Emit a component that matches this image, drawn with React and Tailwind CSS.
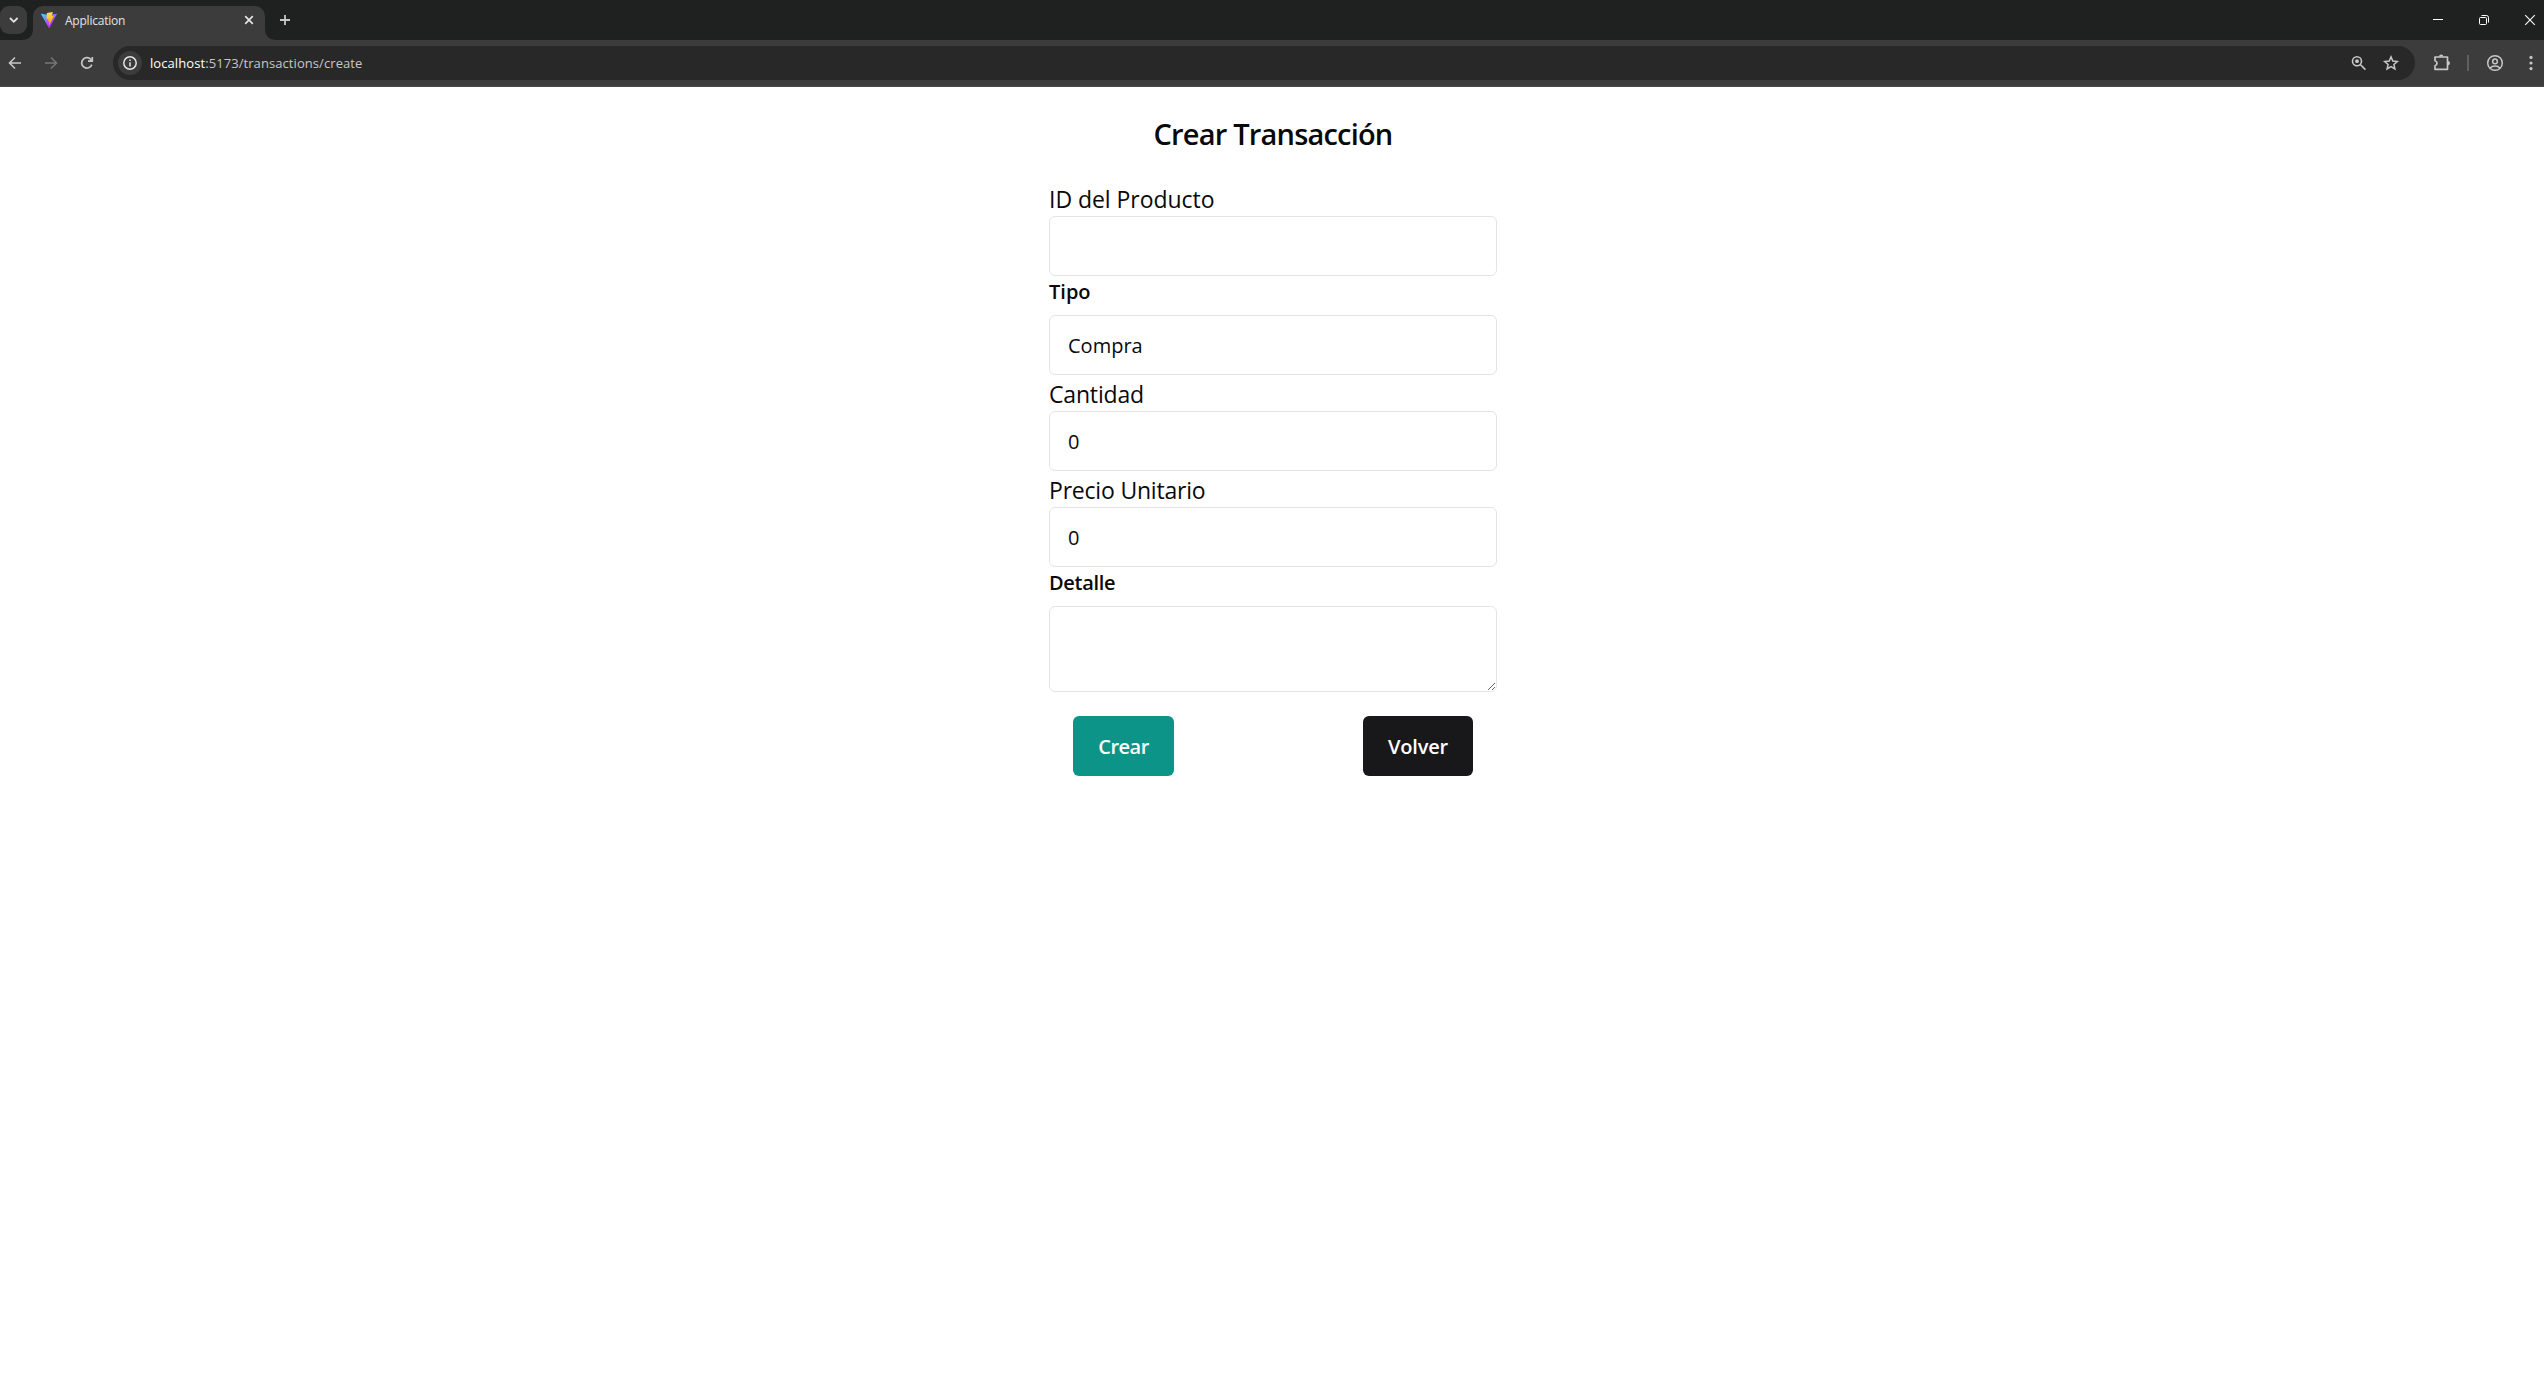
const ICON = "block h-5 w-5 shrink-0";

function Foot({ flip }) {
  return (
    <svg viewBox="0 0 10 10" className={flip ? "h-2.5 w-2.5 shrink-0 -scale-x-100" : "-ml-1 h-2.5 w-2.5 shrink-0"}>
      <path d="M10 0v10H0A10 10 0 0 0 10 0Z" fill="#3c3c3c" />
    </svg>
  );
}

function ViteLogo() {
  return (
    <svg viewBox="0 0 256 257" className="h-4 w-4 shrink-0">
      <defs>
        <linearGradient id="vite-a" x1="-.8%" x2="57.6%" y1="7.7%" y2="78.4%">
          <stop offset="0%" stopColor="#41D1FF" />
          <stop offset="100%" stopColor="#BD34FE" />
        </linearGradient>
        <linearGradient id="vite-b" x1="43.4%" x2="50.3%" y1="2.2%" y2="89%">
          <stop offset="0%" stopColor="#FFEA83" />
          <stop offset="8.3%" stopColor="#FFDD35" />
          <stop offset="100%" stopColor="#FFA800" />
        </linearGradient>
      </defs>
      <path fill="url(#vite-a)" d="M255.153 37.938L134.897 252.976c-2.483 4.44-8.862 4.466-11.382.048L.875 37.958c-2.746-4.814 1.371-10.646 6.827-9.67l120.385 21.517a6.537 6.537 0 0 0 2.322-.004l117.867-21.483c5.438-.991 9.574 4.796 6.877 9.62Z" />
      <path fill="url(#vite-b)" d="M185.432.063L96.44 17.501a3.268 3.268 0 0 0-2.634 3.014l-5.474 92.456a3.268 3.268 0 0 0 3.997 3.378l24.777-5.718c2.318-.535 4.413 1.507 3.936 3.838l-7.361 36.047c-.495 2.426 1.782 4.5 4.151 3.78l15.304-4.649c2.372-.72 4.652 1.36 4.15 3.788l-11.698 56.621c-.732 3.542 3.979 5.473 5.943 2.437l1.313-2.028l72.516-144.72c1.215-2.423-.88-5.186-3.54-4.672l-25.505 4.922c-2.396.462-4.435-1.77-3.759-4.114l16.646-57.705c.677-2.35-1.37-4.583-3.769-4.113Z" />
    </svg>
  );
}

function TabStrip() {
  return (
    <div className="flex h-10 bg-[#1f2120]">
      <div className="mt-1.5 flex h-7 w-[27px] items-center justify-center rounded-[9px] bg-[#3c3c3c]">
        <svg viewBox="0 0 20 20" className={ICON} fill="none" stroke="#e3e3e3" strokeWidth="1.8">
          <path d="M6 8l3.8 3.8L13.600 8" />
        </svg>
      </div>
      <div className="flex items-end">
        <Foot />
        <div className="flex h-[34px] w-[232px] items-center rounded-t-[10px] bg-[#3c3c3c] px-2 pb-1.5">
          <ViteLogo />
          <span className="ml-2 flex-1 pt-0.5 text-xs tracking-[-0.22px] text-[#e3e3e3]">Application</span>
          <svg viewBox="0 0 16 16" className="h-4 w-4" stroke="#e3e3e3" strokeWidth="1.7">
            <path d="M4.200 4.200l7.600 7.600M11.800 4.200l-7.600 7.600" />
          </svg>
        </div>
        <Foot flip />
      </div>
      <div className="flex flex-1 items-center text-[#c7c7c7]">
        <svg viewBox="0 0 20 20" className={ICON} stroke="currentColor" strokeWidth="1.8">
          <path d="M10 5v10M5 10h10" />
        </svg>
      </div>
      <div className="flex items-center gap-[26px] pr-1">
        <svg viewBox="0 0 20 20" className={ICON} stroke="#fff" strokeWidth="1">
          <path d="M5 9.500h10" />
        </svg>
        <svg viewBox="0 0 20 20" className={ICON} fill="none" stroke="#fff" strokeWidth="1">
          <rect x="5.500" y="7.500" width="7" height="7" rx="1" />
          <path d="M7.500 5.500h5a2 2 0 0 1 2 2v5" />
        </svg>
        <svg viewBox="0 0 20 20" className={ICON} stroke="#fff" strokeWidth="1.1">
          <path d="M5.200 5.200l9.600 9.600M14.800 5.200l-9.600 9.600" />
        </svg>
      </div>
    </div>
  );
}

function Toolbar() {
  return (
    <div className="flex h-[47px] items-center border-b border-[#4a4a4a] bg-[#3c3c3c] pl-[5px]">
      <svg viewBox="0 0 20 20" className={ICON} fill="none" stroke="#c7c7c7" strokeWidth="1.6">
        <path d="M16 10H5M10 4.500L4.500 10l5.500 5.500" />
      </svg>
      <svg viewBox="0 0 20 20" className={`${ICON} ml-4`} fill="none" stroke="#757575" strokeWidth="1.6">
        <path d="M4 10h11M10 4.500l5.500 5.500-5.500 5.500" />
      </svg>
      <svg viewBox="0 0 20 20" className={`${ICON} ml-4`} fill="none" stroke="#c7c7c7" strokeWidth="1.7">
        <path d="M14.800 11.600A5.200 5.200 0 1 1 14.200 7M15.300 4v4.200H11" />
      </svg>
      <div className="ml-4 flex h-[34px] w-[2302px] items-center rounded-full bg-[#282828] pr-3.5 pl-[5px]">
        <div className="flex h-6 w-6 items-center justify-center rounded-full bg-[#3c3c3c]">
          <svg viewBox="0 0 20 20" className={ICON} fill="none" stroke="#e3e3e3" strokeWidth="1.5">
            <circle cx="10" cy="10" r="6.200" />
            <path d="M10 9.200v4.200M10 6.400v1.600" />
          </svg>
        </div>
        <span className="ml-2 flex-1 pt-px text-[13px] tracking-[0.075px] text-[#c7c7c7]">
          <span className="text-white">localhost</span>:5173/transactions/create
        </span>
        <svg viewBox="0 0 20 20" className={ICON} fill="none" stroke="#c7c7c7" strokeWidth="1.6">
          <circle cx="8" cy="8.200" r="4.500" />
          <path d="M11.300 11.500l5.100 5.100" />
          <circle cx="8" cy="8.200" r="1.900" fill="#c7c7c7" stroke="none" />
        </svg>
        <svg viewBox="0 0 20 20" className={`${ICON} ml-3`} fill="none" stroke="#c7c7c7" strokeWidth="1.5">
          <path d="M10 3.900l1.800 4.200 4.500.400-3.400 3 1 4.400L10 13.600l-3.900 2.300 1-4.400-3.400-3 4.500-.400z" />
        </svg>
      </div>
      <svg viewBox="0 0 20 20" className={`${ICON} ml-[17px]`} fill="none" stroke="#c7c7c7" strokeWidth="1.7">
        <path d="M3 4h12.500v12.300H3v-3.500c2.700-.700 2.700-4.300 0-5z" strokeLinejoin="round" />
        <path d="M7 3.600a2.200 2.200 0 0 1 4.400 0zM15.800 7.900a2.200 2.200 0 0 1 0 4.400z" fill="#c7c7c7" stroke="none" />
      </svg>
      <div className="ml-[15px] h-4 w-0.5 bg-[#5f5f5f]" />
      <svg viewBox="0 0 20 20" className={`${ICON} ml-4`} fill="none" stroke="#c7c7c7" strokeWidth="1.5">
        <circle cx="10" cy="10" r="7.300" />
        <circle cx="10" cy="8.400" r="2.300" />
        <path d="M4.900 15a7.600 7.600 0 0 1 10.200 0" />
      </svg>
      <svg viewBox="0 0 20 20" className={`${ICON} ml-4`} fill="#c7c7c7">
        <circle cx="10" cy="4.400" r="1.600" />
        <circle cx="10" cy="10" r="1.600" />
        <circle cx="10" cy="15.600" r="1.600" />
      </svg>
    </div>
  );
}

const BOX = "block w-full rounded-md border border-[#e4e4e7] bg-white pl-[18px] text-xl outline-none";

export default function App() {
  return (
    <div className="min-h-screen bg-white font-['Open_Sans',sans-serif] text-[#09090b]">
      <TabStrip />
      <Toolbar />
      <main className="flex justify-center pt-[23px] pl-0.5">
        <form className="w-[448px]">
          <h2 className="mb-[22px] h-12 text-center text-[29px] leading-[48px] font-semibold tracking-[-0.8px]">Crear Transacción</h2>
          <label className="block h-9 text-[23px] leading-[38px] tracking-[-0.04px]">ID del Producto</label>
          <input className={`${BOX} h-[60px]`} />
          <label className="block h-[39px] text-xl leading-8 font-semibold">Tipo</label>
          <select className={`${BOX} h-[60px] appearance-none pt-0.5`}>
            <option>Compra</option>
          </select>
          <label className="block h-9 text-[23px] leading-[38px] tracking-[-0.17px]">Cantidad</label>
          <input className={`${BOX} h-[60px] pt-px`} defaultValue="0" />
          <label className="block h-9 text-[23px] leading-[38px] tracking-[-0.2px]">Precio Unitario</label>
          <input className={`${BOX} h-[60px] pt-px`} defaultValue="0" />
          <label className="block h-[39px] text-xl leading-8 font-semibold tracking-[-0.3px]">Detalle</label>
          <textarea className={`${BOX} h-[86px] resize`} />
          <div className="mt-6 flex justify-between px-6">
            <button type="button" className="h-[60px] w-[101px] rounded-md bg-[#0d9488] pt-0.5 text-xl font-semibold tracking-[-0.5px] text-white">Crear</button>
            <button type="button" className="h-[60px] w-[110px] rounded-md bg-[#18181b] pt-0.5 text-xl font-semibold tracking-[-0.2px] text-white">Volver</button>
          </div>
        </form>
      </main>
    </div>
  );
}
